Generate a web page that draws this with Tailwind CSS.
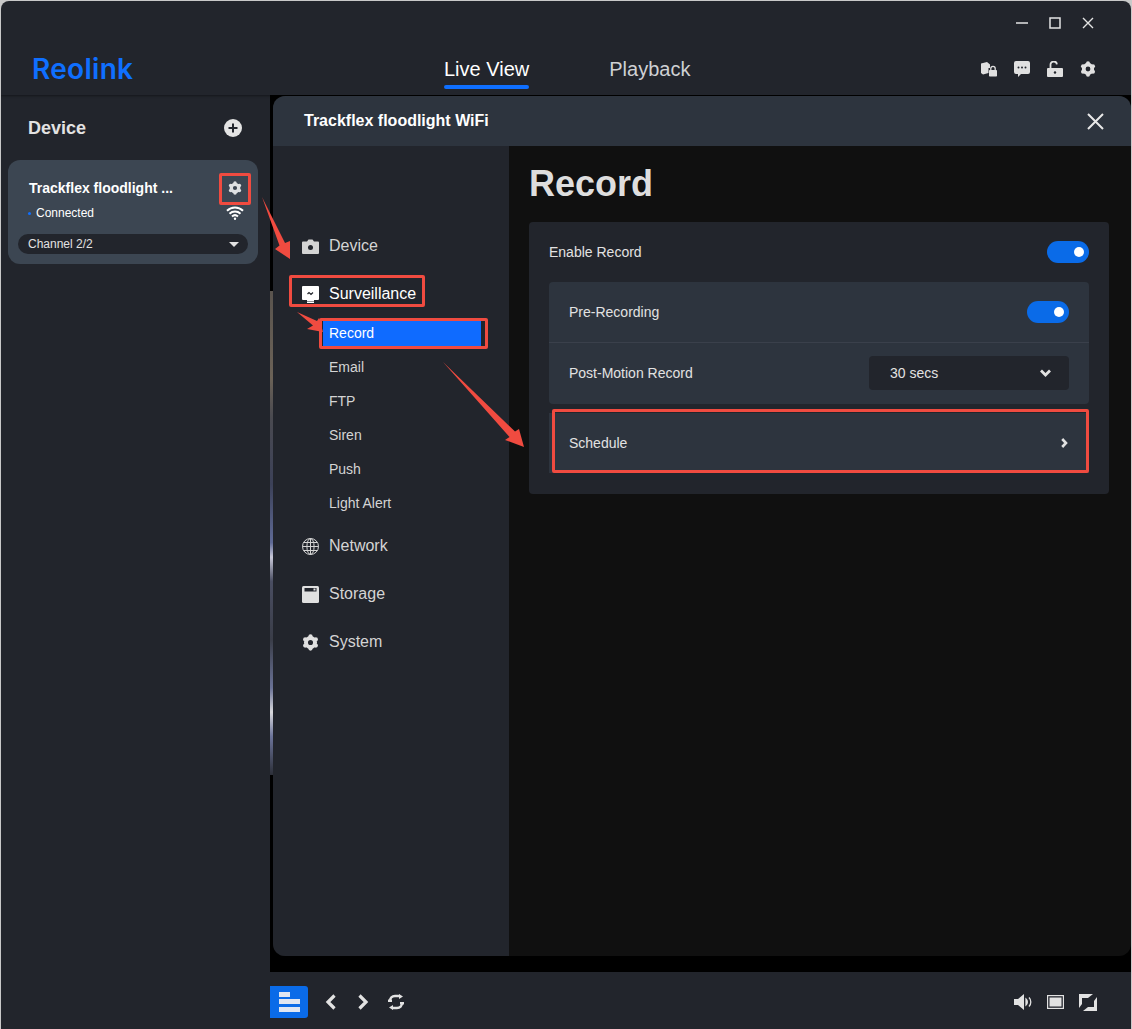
<!DOCTYPE html>
<html lang="en">
  <head>
    <meta charset="UTF-8" />
    <title>Reolink</title>
    <script src="https://cdn.jsdelivr.net/npm/@tailwindcss/browser@4"></script>
  </head>
  <body class="bg-[#c9c9c9] font-['Liberation_Sans',Arial,sans-serif]">
    <svg class="hidden">
      <symbol id="gear" viewBox="0 0 24 24">
        <circle cx="12" cy="12" r="6.4" fill="none" stroke="currentColor" stroke-width="5.6" />
        <g fill="currentColor">
          <circle cx="12" cy="3.4" r="3" /><circle cx="12" cy="20.6" r="3" />
          <circle cx="4.5" cy="7.7" r="3" /><circle cx="19.5" cy="7.7" r="3" />
          <circle cx="4.5" cy="16.3" r="3" /><circle cx="19.5" cy="16.3" r="3" />
        </g>
      </symbol>
    </svg>

    <div class="relative w-[1132px] h-[1029px] overflow-hidden">
      <div class="ml-px mr-px mt-px h-[1028px] rounded-t-[8px] overflow-hidden bg-[#22252c] flex flex-col">
        <!-- title bar and tabs -->
        <header class="h-[94px] shrink-0 flex flex-col shadow-[0_1px_2px_#15171b]">
          <div class="h-[44px] flex items-center justify-end pr-[27px] text-[#e4e4e4]">
            <div class="w-[33px] flex justify-center">
              <svg class="w-[12px] h-[12px]" viewBox="0 0 12 12"><path d="M0 6h12" stroke="currentColor" stroke-width="1.3" /></svg>
            </div>
            <div class="w-[33px] flex justify-center">
              <svg class="w-[12px] h-[12px]" viewBox="0 0 12 12"><rect x="1" y="1" width="10" height="10" fill="none" stroke="currentColor" stroke-width="1.5" /></svg>
            </div>
            <div class="w-[33px] flex justify-center">
              <svg class="w-[12px] h-[12px]" viewBox="0 0 12 12"><path d="M1 1l10 10M11 1L1 11" stroke="currentColor" stroke-width="1.4" /></svg>
            </div>
          </div>
          <div class="flex h-[50px] items-start">
            <div class="w-[443px] pl-[31px] mt-[5px] font-['Inter',sans-serif] font-semibold text-[28px] leading-[38px] tracking-[0.3px] text-[#0f6fff]">Reolink</div>
            <div class="flex flex-col items-center mt-[12px]">
              <span class="text-[20px] leading-[24px] text-white">Live View</span>
              <span class="w-[85px] h-[4px] mt-[4px] rounded-full bg-[#0f6fff]"></span>
            </div>
            <span class="ml-[80px] mt-[12px] text-[20px] leading-[24px] text-[#cfd1d4]">Playback</span>
            <div class="ml-auto mr-[27px] mt-[14px] flex text-[#e0e0e0]">
              <div class="w-[33px] h-[20px] flex justify-center items-center">
                <svg class="w-[16px] h-[16px]" viewBox="0 0 16 16" fill="currentColor"><path d="M0 2.500L6 1l3 2.500V7H7.500v5L2 13.500 0 12z" /><rect x="8" y="9" width="8" height="6.500" rx=".8" /><path d="M9.800 9V7.500a2.200 2.200 0 0 1 4.400 0V9" fill="none" stroke="currentColor" stroke-width="1.300" /></svg>
              </div>
              <div class="w-[33px] h-[20px] flex justify-center items-center">
                <svg class="w-[16px] h-[16px]" viewBox="0 0 16 16"><path fill="currentColor" d="M2 0h12a2 2 0 0 1 2 2v9a2 2 0 0 1-2 2H7l-3 3v-3H2a2 2 0 0 1-2-2V2a2 2 0 0 1 2-2z" /><circle cx="4.500" cy="6.500" r="1" fill="#22252c" /><circle cx="8" cy="6.500" r="1" fill="#22252c" /><circle cx="11.500" cy="6.500" r="1" fill="#22252c" /></svg>
              </div>
              <div class="w-[33px] h-[20px] flex justify-center items-center">
                <svg class="w-[16px] h-[16px]" viewBox="0 0 16 16"><rect x="0" y="7" width="16" height="9" rx="1" fill="currentColor" /><path d="M3.500 7V4a3.200 3.200 0 0 1 6.400-.6" fill="none" stroke="currentColor" stroke-width="1.800" /><circle cx="8" cy="11.500" r="1.200" fill="#22252c" /></svg>
              </div>
              <div class="w-[33px] h-[20px] flex justify-center items-center">
                <svg class="w-[16px] h-[16px]"><use href="#gear" /></svg>
              </div>
            </div>
          </div>
        </header>

        <div class="flex flex-1 min-h-0">
          <!-- device sidebar -->
          <aside class="w-[269px] shrink-0 px-[7px]">
            <div class="h-[65px] pt-px flex items-center justify-between pl-[20px] pr-[21px]">
              <span class="text-[18px] font-bold text-[#e2e2e2]">Device</span>
              <svg class="w-[18px] h-[18px]" viewBox="0 0 18 18"><circle cx="9" cy="9" r="9" fill="#e4e4e4" /><path d="M9 4.500v9M4.500 9h9" stroke="#22252c" stroke-width="2" /></svg>
            </div>
            <div class="w-[250px] h-[104px] rounded-[12px] bg-[#3c4652] px-[10px] flex flex-col">
              <div class="flex items-center justify-between pl-[11px] pr-[6px] h-[28px] mt-[14px]">
                <span class="text-[14px] font-bold text-white">Trackflex floodlight ...</span>
                <svg class="w-[14px] h-[14px] text-[#dfe1e3]"><use href="#gear" /></svg>
              </div>
              <div class="flex items-center justify-between pl-[10px] pr-[4px] h-[22px]">
                <span class="flex items-center gap-[5px] text-[12px] text-white"><span class="w-[3px] h-[3px] rounded-full bg-[#0f6fff]"></span>Connected</span>
                <svg class="w-[18px] h-[14px]" viewBox="0 0 18 14" fill="none" stroke="#fff" stroke-width="2"><path d="M1 4.800a11.500 11.500 0 0 1 16 0M3.500 7.800a8 8 0 0 1 11 0M6 10.500a4.500 4.500 0 0 1 6 0" /><circle cx="9" cy="12.800" r="1.200" fill="#fff" stroke="none" /></svg>
              </div>
              <div class="h-[20px] mt-[10px] rounded-full bg-[#22252c] flex items-center justify-between pl-[10px] pr-[9px]">
                <span class="text-[12px] text-[#e2e2e2]">Channel 2/2</span>
                <span class="w-0 h-0 border-x-[5px] border-x-transparent border-t-[5px] border-t-[#e2e2e2]"></span>
              </div>
            </div>
          </aside>

          <div class="flex-1 flex flex-col min-w-0">
            <main class="h-[877px] bg-black flex">
              <!-- sliver of the video behind the dialog -->
              <div class="w-[3px] h-[484px] mt-[196px] shrink-0 bg-[linear-gradient(to_bottom,#5a544e_0%,#6b6257_18%,#4a4a50_26%,#3c4158_40%,#5f6a96_52%,#c8c8d8_55%,#4a4e62_60%,#3a3d48_72%,#6a7296_82%,#d8d8dc_87%,#6c749a_92%,#2c2f38_100%)]"></div>

              <!-- settings dialog -->
              <section class="flex-1 h-[860px] mt-px rounded-[12px] overflow-hidden flex flex-col bg-[#101010]">
                <div class="h-[50px] shrink-0 bg-[#2d343e] flex items-center justify-between pl-[31px] pr-[27px]">
                  <span class="text-[16px] font-bold text-white">Trackflex floodlight WiFi</span>
                  <svg class="w-[17px] h-[17px]" viewBox="0 0 17 17"><path d="M1 1l15 15M16 1L1 16" stroke="#e8e8e8" stroke-width="2" /></svg>
                </div>
                <div class="flex flex-1 min-h-0">
                  <nav class="w-[236px] shrink-0 bg-[#22252c] pt-[76px] text-[#d4d4d4]">
                    <div class="h-[48px] pl-[29px] flex items-center gap-[10px] text-[16px]">
                      <svg class="w-[17px] h-[17px]" viewBox="0 0 17 15"><path fill="#d4d4d4" d="M1 2.500h4L6.500.5h4L12 2.500h4a1 1 0 0 1 1 1V14a1 1 0 0 1-1 1H1a1 1 0 0 1-1-1V3.500a1 1 0 0 1 1-1z" /><circle cx="8.500" cy="8.500" r="2.500" fill="#22252c" /></svg>
                      Device
                    </div>
                    <div class="h-[48px] pl-[29px] flex items-center gap-[10px] text-[16px] text-white">
                      <svg class="w-[17px] h-[17px]" viewBox="0 0 17 17"><path fill="#fff" d="M1 0h15a1 1 0 0 1 1 1v12a1 1 0 0 1-1 1h-4v1H5v-1H1a1 1 0 0 1-1-1V1a1 1 0 0 1 1-1z" /><path d="M5.500 8l1.500-1.500L9 8.500l2-2" fill="none" stroke="#22252c" stroke-width="1.200" /><rect x="5" y="15.500" width="7" height="1.500" fill="#fff" /></svg>
                      Surveillance
                    </div>
                    <ul class="-mt-[2px] text-[14px]">
                      <li class="h-[34px] flex items-center ml-[50px]"><span class="w-[158px] h-[25px] bg-[#0f6bff] pl-[6px] leading-[25px] text-white">Record</span></li>
                      <li class="h-[34px] leading-[34px] pl-[56px]">Email</li>
                      <li class="h-[34px] leading-[34px] pl-[56px]">FTP</li>
                      <li class="h-[34px] leading-[34px] pl-[56px]">Siren</li>
                      <li class="h-[34px] leading-[34px] pl-[56px]">Push</li>
                      <li class="h-[34px] leading-[34px] pl-[56px]">Light Alert</li>
                    </ul>
                    <div class="mt-[2px] h-[48px] pl-[29px] flex items-center gap-[10px] text-[16px]">
                      <svg class="w-[17px] h-[17px]" viewBox="0 0 17 17" fill="none" stroke="#d4d4d4" stroke-width="1"><circle cx="8.500" cy="8.500" r="8" /><ellipse cx="8.500" cy="8.500" rx="3.600" ry="8" /><path d="M8.500.5v16M.5 8.500h16M1.600 4.500h13.800M1.600 12.500h13.800" /></svg>
                      Network
                    </div>
                    <div class="h-[48px] pl-[29px] flex items-center gap-[10px] text-[16px]">
                      <svg class="w-[17px] h-[17px]" viewBox="0 0 17 17"><rect width="17" height="17" rx="1.500" fill="#e0e0e0" /><rect x="2.500" y="2" width="12" height="3.500" fill="#22252c" /><rect x="11.500" y="2.500" width="2" height="2" fill="#e0e0e0" /></svg>
                      Storage
                    </div>
                    <div class="h-[48px] pl-[29px] flex items-center gap-[10px] text-[16px]">
                      <svg class="w-[17px] h-[17px] text-[#e0e0e0]"><use href="#gear" /></svg>
                      System
                    </div>
                  </nav>

                  <div class="flex-1 px-[20px] min-w-0">
                    <h1 class="text-[36px] font-bold leading-[42px] text-[#dedede] mt-[17px] mb-[17px]">Record</h1>
                    <div class="w-[580px] h-[272px] rounded-[4px] bg-[#22252c] px-[20px] text-[14px] text-[#e2e2e2]">
                      <div class="h-[60px] flex items-center justify-between">
                        Enable Record
                        <span class="w-[42px] h-[22px] rounded-full bg-[#0a6be8] flex items-center justify-end pr-[5px]"><span class="w-[10px] h-[10px] rounded-full bg-white"></span></span>
                      </div>
                      <div class="h-[122px] rounded-[4px] bg-[#2d343e] px-[20px]">
                        <div class="h-[61px] flex items-center justify-between border-b border-[#3a404b] -mx-[20px] px-[20px]">
                          Pre-Recording
                          <span class="w-[42px] h-[22px] rounded-full bg-[#0a6be8] flex items-center justify-end pr-[5px]"><span class="w-[10px] h-[10px] rounded-full bg-white"></span></span>
                        </div>
                        <div class="h-[60px] flex items-center justify-between">
                          Post-Motion Record
                          <div class="w-[200px] h-[34px] rounded-[4px] bg-[#22252c] flex items-center justify-between pl-[21px] pr-[18px]">
                            30 secs
                            <svg class="w-[11px] h-[8px]" viewBox="0 0 11 8"><path d="M1 1.500l4.500 4.500L10 1.500" fill="none" stroke="#e2e2e2" stroke-width="2.800" /></svg>
                          </div>
                        </div>
                      </div>
                      <div class="h-[60px] mt-[9px] bg-[#2d343e] flex items-center justify-between pl-[20px] pr-[21px]">
                        Schedule
                        <svg class="w-[7px] h-[10px]" viewBox="0 0 7 10"><path d="M1.200 1L5 5 1.200 9" fill="none" stroke="#e2e2e2" stroke-width="2.600" /></svg>
                      </div>
                    </div>
                  </div>
                </div>
              </section>
            </main>

            <!-- player toolbar -->
            <footer class="flex-1 flex items-center text-[#e2e2e2] pt-[3px]">
              <div class="w-[38px] h-[32px] rounded-r-[3px] bg-[#0a6be8] flex items-center justify-center">
                <svg class="w-[21px] h-[20px]" viewBox="0 0 21 20" fill="#dfe6f2"><rect x="0" y="0" width="11" height="5" /><rect x="0" y="7" width="21" height="5" /><rect x="0" y="15" width="21" height="5" /></svg>
              </div>
              <svg class="w-[12px] h-[16px] ml-[17px]" viewBox="0 0 12 16"><path d="M9.500 1.500L3 8l6.500 6.500" fill="none" stroke="currentColor" stroke-width="3.200" /></svg>
              <svg class="w-[12px] h-[16px] ml-[20px]" viewBox="0 0 12 16"><path d="M2.500 1.500L9 8l-6.500 6.500" fill="none" stroke="currentColor" stroke-width="3.200" /></svg>
              <svg class="w-[16px] h-[16px] ml-[19px]" viewBox="0 0 16 16" fill="none" stroke="currentColor" stroke-width="2.400"><path d="M2 7c0-3 2-5 5-5h5" /><path d="M14 9c0 3-2 5-5 5H4" /><path fill="currentColor" stroke="none" d="M11 0l4 2.500L11 5zM5 11l-4 2.500L5 16zM0 5.500h4V8H0zM12 8h4v2.500h-4z" /></svg>
              <div class="ml-auto flex items-center pr-[34px]">
                <svg class="w-[18px] h-[16px]" viewBox="0 0 18 16" fill="currentColor"><path d="M0 5h4l6-5v16l-6-5H0z" /><path d="M12 5a4 4 0 0 1 0 6zM15 3.500a6.500 6.500 0 0 1 0 9" stroke="currentColor" fill="none" stroke-width="1.300" /></svg>
                <svg class="w-[17px] h-[14px] ml-[15px]" viewBox="0 0 17 14"><rect x=".6" y=".6" width="15.800" height="12.800" fill="none" stroke="currentColor" stroke-width="1.200" /><rect x="2.500" y="2.500" width="12" height="9" fill="currentColor" /></svg>
                <svg class="w-[18px] h-[17px] ml-[15px]" viewBox="0 0 18 17" fill="currentColor"><path d="M0 0h14L9 4H3v6l-3 4zM18 17H4l5-4h6V7l3-4z" /></svg>
              </div>
            </footer>
          </div>
        </div>
      </div>

      <!-- red annotations laid over the screenshot -->
      <div class="absolute left-[219px] top-[173px] w-[32px] h-[32px] border-[3px] border-[#f04b40] rounded-[2px]"></div>
      <div class="absolute left-[289px] top-[275px] w-[136px] h-[32px] border-[3px] border-[#f04b40] rounded-[2px]"></div>
      <div class="absolute left-[319px] top-[318px] w-[169px] h-[31px] border-[3px] border-[#f04b40] rounded-[2px]"></div>
      <div class="absolute left-[552px] top-[409px] w-[537px] h-[64px] border-[3px] border-[#f04b40] rounded-[2px]"></div>
      <svg class="absolute left-0 top-0 w-[1132px] h-[1029px] pointer-events-none" viewBox="0 0 1132 1029" fill="#f04b40">
        <polygon points="262,197 285,243 290,241 290,259 275,249 279.500,245.500" />
        <polygon points="297,312 317,321 319,318 323,332 307,329 313,325.500" />
        <polygon points="443,362 515,431.500 519,429 524,447 505,440 509.500,437" />
      </svg>
    </div>
  </body>
</html>
